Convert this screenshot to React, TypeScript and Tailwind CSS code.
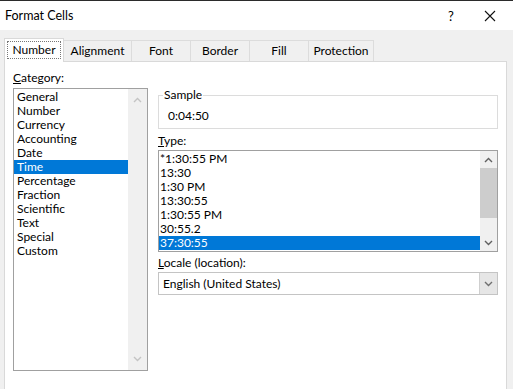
import React from 'react';

const categories = [
  'General', 'Number', 'Currency', 'Accounting', 'Date', 'Time', 'Percentage',
  'Fraction', 'Scientific', 'Text', 'Special', 'Custom',
];

const types = ['*1:30:55 PM', '13:30', '1:30 PM', '13:30:55', '1:30:55 PM', '30:55.2', '37:30:55'];

const tabs = [
  { name: 'Alignment', w: 'w-[69px]' },
  { name: 'Font', w: 'w-[60px]' },
  { name: 'Border', w: 'w-[60px]' },
  { name: 'Fill', w: 'w-[60px]' },
  { name: 'Protection', w: 'w-[66px]' },
];

function Chevron({ up, color }: { up?: boolean; color: string }) {
  return (
    <svg width="9" height="6" viewBox="0 0 9 6" fill="none">
      <path
        d={up ? 'M1 5 L4.5 1.5 L8 5' : 'M1 1 L4.5 4.5 L8 1'}
        stroke={color}
        strokeWidth="1.4"
      />
    </svg>
  );
}

export default function App() {
  return (
    <div className="w-[513px] h-[389px] overflow-hidden bg-[#f0f0f0] border-t border-[#2b2b2b] font-['Lato',sans-serif] text-[12px] leading-[14px] text-black">
      {/* Title bar */}
      <div className="h-[29px] bg-white flex items-center pl-[5px]">
        <span className="flex-1 text-[12.5px]">Format Cells</span>
        <span className="w-[20px] text-center text-[13px] mr-[23px]">?</span>
        <svg width="12" height="12" viewBox="0 0 12 12" className="mr-[17px]">
          <path d="M1 1 L11 11 M11 1 L1 11" stroke="#111" strokeWidth="1.1" />
        </svg>
      </div>

      {/* Tabs */}
      <div className="flex items-end pl-[4px] pt-[7px] h-[31px]">
        <div className="relative z-10 -mb-px h-[24px] w-[60px] bg-white border border-b-0 border-[#d9d9d9] p-[2px]">
          <div className="h-[18px] border border-dotted border-[#777] flex items-center justify-center">
            Number
          </div>
        </div>
        {tabs.map((t) => (
          <div
            key={t.name}
            className={`${t.w} h-[21px] -ml-px border border-b-0 border-[#dcdcdc] bg-[#f0f0f0] flex items-center justify-center`}
          >
            {t.name}
          </div>
        ))}
      </div>

      {/* Panel */}
      <div className="ml-[4px] w-[503px] h-[340px] bg-white border border-[#d9d9d9] flex pl-[8px] pt-[9px]">
        {/* Category column */}
        <div className="w-[135px] flex flex-col">
          <div className="h-[14px] mb-[3px]">
            <span className="underline">C</span>ategory:
          </div>
          <div className="h-[283px] border border-[#a0a0a0] flex">
            <div className="flex-1 pt-px">
              {categories.map((c) => (
                <div
                  key={c}
                  className={`h-[14px] pl-[3px] ${c === 'Time' ? 'bg-[#0078d7] text-white' : ''}`}
                >
                  {c}
                </div>
              ))}
            </div>
            <div className="w-[19px] bg-[#f0f0f0] flex flex-col justify-between items-center py-[8px]">
              <Chevron up color="#c4c4c4" />
              <Chevron color="#c4c4c4" />
            </div>
          </div>
        </div>

        {/* Right column */}
        <div className="ml-[10px] w-[340px] flex flex-col">
          <div className="relative mt-[24px] h-[34px] border border-[#dcdcdc]">
            <span className="absolute -top-[8px] left-[4px] bg-white px-px">Sample</span>
            <div className="pl-[9px] pt-[13px]">0:04:50</div>
          </div>

          <div className="mt-[5px] h-[14px]">
            <span className="underline">T</span>ype:
          </div>
          <div className="mt-[2px] h-[102px] border border-[#a0a0a0] flex">
            <div className="flex-1 pt-px">
              {types.map((t) => (
                <div
                  key={t}
                  className={`h-[14px] pl-px ${t === '37:30:55' ? 'bg-[#0078d7] text-white' : ''}`}
                >
                  {t}
                </div>
              ))}
            </div>
            <div className="w-[17px] bg-[#f0f0f0] flex flex-col">
              <div className="h-[17px] flex items-center justify-center">
                <Chevron up color="#606060" />
              </div>
              <div className="h-[50px] bg-[#cdcdcd]" />
              <div className="flex-1" />
              <div className="h-[17px] flex items-center justify-center">
                <Chevron color="#606060" />
              </div>
            </div>
          </div>

          <div className="mt-[4px] h-[14px]">
            <span className="underline">L</span>ocale (location):
          </div>
          <div className="mt-[2px] h-[23px] border border-[#c4c4c4] flex items-center">
            <span className="flex-1 pl-[4px]">English (United States)</span>
            <div className="w-[18px] h-[21px] bg-[#e6e6e6] border-l border-[#cfcfcf] flex items-center justify-center">
              <Chevron color="#707070" />
            </div>
          </div>
        </div>
      </div>
    </div>
  );
}
